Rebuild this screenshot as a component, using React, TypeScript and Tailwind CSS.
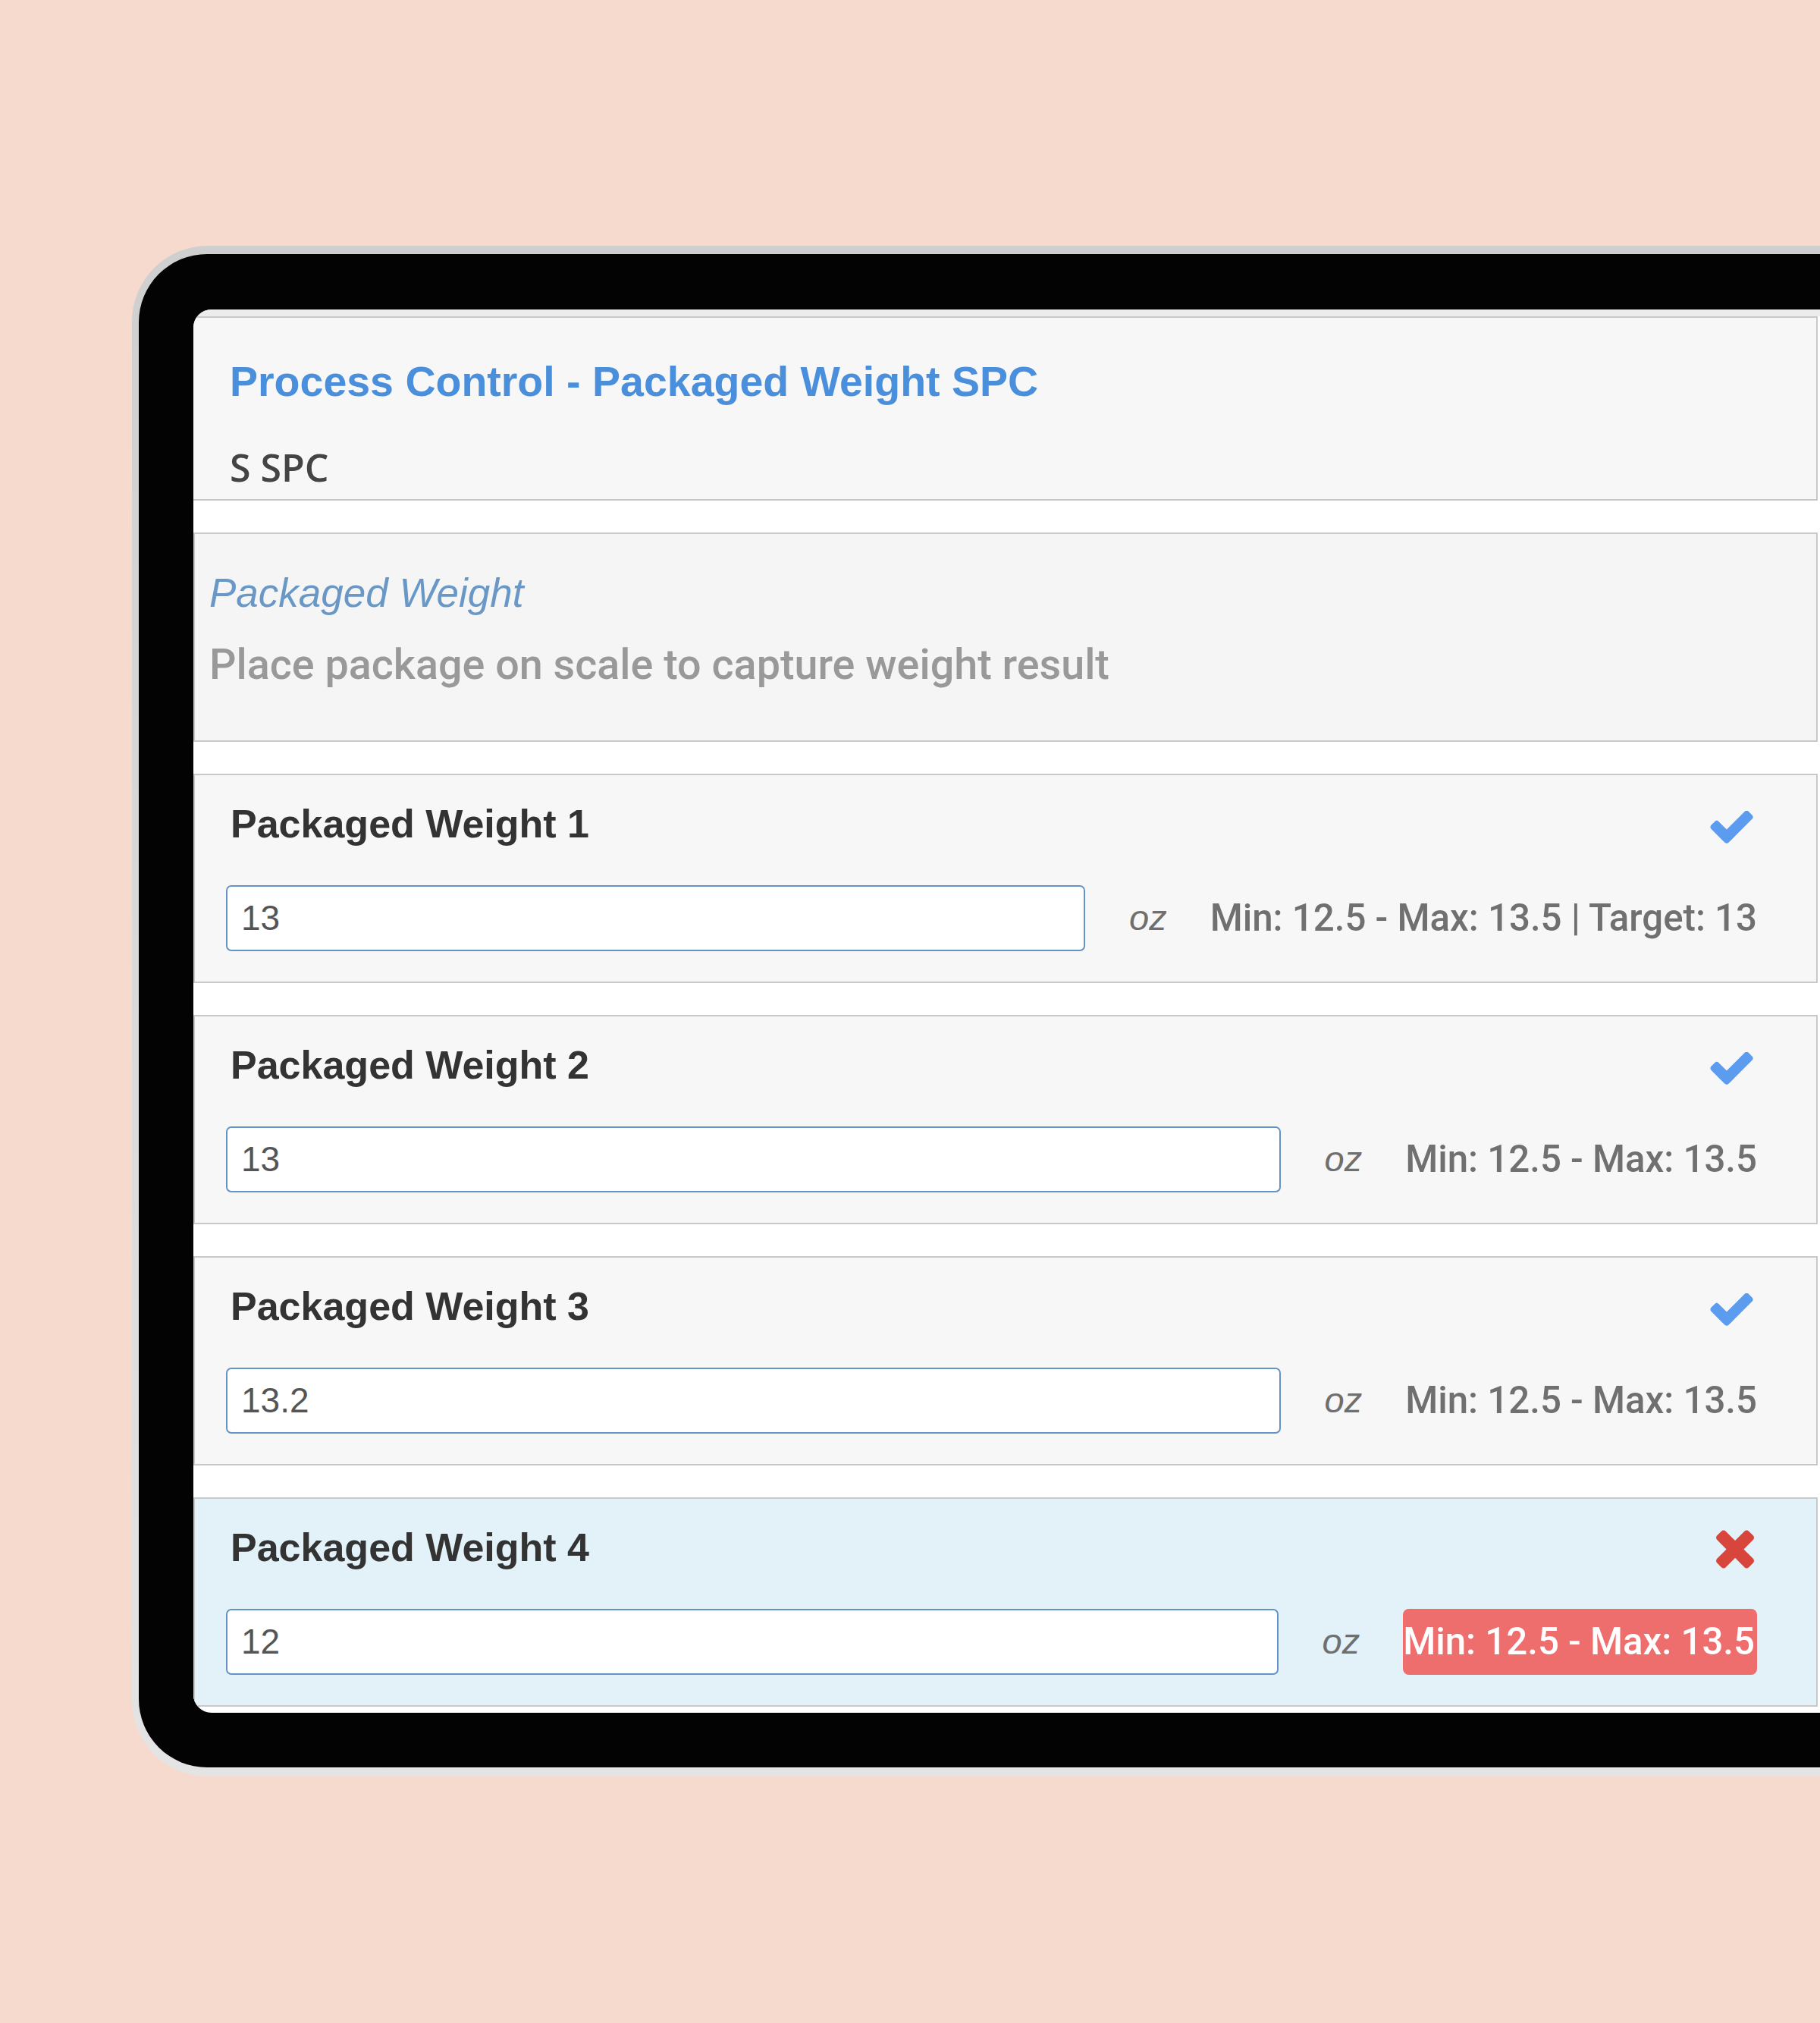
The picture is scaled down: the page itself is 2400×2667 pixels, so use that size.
type Reading = {
  label: string;
  value: string;
  range: string;
  ok: boolean;
};

const readings: Reading[] = [
  { label: "Packaged Weight 1", value: "13", range: "Min: 12.5 - Max: 13.5 | Target: 13", ok: true },
  { label: "Packaged Weight 2", value: "13", range: "Min: 12.5 - Max: 13.5", ok: true },
  { label: "Packaged Weight 3", value: "13.2", range: "Min: 12.5 - Max: 13.5", ok: true },
  { label: "Packaged Weight 4", value: "12", range: "Min: 12.5 - Max: 13.5", ok: false },
];

const sans = "font-['Liberation_Sans','Helvetica_Neue',Arial,sans-serif]";
const medium = "font-['Roboto','Liberation_Sans',Arial,sans-serif] font-medium";

// font-awesome 4 style glyphs
function CheckIcon() {
  return (
    <svg viewBox="110 420 1570 1110" className="mr-[5px] mt-[12px] h-[46px] w-[57px] text-[#5b9cee]" fill="currentColor">
      <path d="M1671 566q0 40-28 68l-724 724-136 136q-28 28-68 28t-68-28l-136-136-362-362q-28-28-28-68t28-68l136-136q28-28 68-28t68 28l294 295 656-657q28-28 68-28t68 28l136 136q28 28 28 68z" />
    </svg>
  );
}

function CrossIcon() {
  return (
    <svg viewBox="110 270 1380 1265" className="mr-[4px] h-[56px] w-[58px] text-[#d8453c]" fill="currentColor">
      <path d="M1490 1322q0 40-28 68l-136 136q-28 28-68 28t-68-28l-294-294-294 294q-28 28-68 28t-68-28l-136-136q-28-28-28-68t28-68l294-294-294-294q-28-28-28-68t28-68l136-136q28-28 68-28t68 28l294 294 294-294q28-28 68-28t68 28l136 136q28 28 28 68t-28 68l-294 294 294 294q28 28 28 68z" />
    </svg>
  );
}

function WeightCard({ reading }: { reading: Reading }) {
  return (
    <div
      className={`mt-[42px] h-[276px] w-[2142px] border-2 border-[#c9c9c9] pl-[41px] pr-[78px] pt-[34px] ${
        reading.ok ? "bg-[#f7f7f7]" : "bg-[#e3f1f9]"
      }`}
    >
      <div className="flex h-[60px] items-center justify-between">
        <span className={`${sans} pl-[6px] text-[52px] font-bold leading-[60px] text-[#333333]`}>
          {reading.label}
        </span>
        {reading.ok ? <CheckIcon /> : <CrossIcon />}
      </div>
      <div className="mt-[51px] flex h-[87px] items-center">
        <div className="flex h-[87px] flex-1 items-center rounded-[7px] border-2 border-[#6393c8] bg-white pl-[18px]">
          <span className={`${sans} text-[46px] text-[#555555]`}>{reading.value}</span>
        </div>
        <span className={`${sans} ml-[58px] text-[47px] italic text-[#6f6f6f]`}>oz</span>
        <span
          className={`${medium} ml-[57px] flex h-[87px] items-center whitespace-nowrap rounded-[8px] text-[49.2px] ${
            reading.ok ? "text-[#707070]" : "bg-[#ee6d6d] pr-[3px] text-white"
          }`}
        >
          {reading.range}
        </span>
      </div>
    </div>
  );
}

export default function App() {
  return (
    <div className="h-[2667px] w-[2400px] overflow-hidden bg-[#f6dacd] pl-[174px] pt-[324px]">
      <div className="w-[2500px] rounded-l-[100px] bg-gradient-to-b from-[#cfcfcf] to-[#e4e4e4] pb-[12px] pl-[9px] pt-[11px]">
        <div className="rounded-l-[90px] bg-[#030303] pb-[72px] pl-[72px] pt-[73px]">
          <div className="h-[1850px] overflow-hidden rounded-l-[24px] bg-white">
            <div className="h-[9px] bg-[#ececec]" />
            <div className="h-[243px] w-[2142px] border-y-2 border-r-2 border-[#c9c9c9] bg-[#f7f7f7] pl-[48px] pt-[52px]">
              <div className={`${sans} text-[55.5px] font-bold leading-[64px] text-[#4a8fdb]`}>
                Process Control - Packaged Weight SPC
              </div>
              <div className="mt-[53px] font-['Open_Sans',sans-serif] text-[50px] font-semibold leading-[56px] text-[#444444]">
                S SPC
              </div>
            </div>
            <div className="mt-[42px] h-[276px] w-[2142px] border-2 border-[#c9c9c9] bg-[#f5f5f5] pl-[19px] pt-[47px]">
              <div className={`${sans} text-[53px] italic leading-[62px] text-[#6a98c6]`}>
                Packaged Weight
              </div>
              <div className={`${medium} mt-[31px] text-[55.7px] leading-[64px] text-[#999999]`}>
                Place package on scale to capture weight result
              </div>
            </div>
            {readings.map((reading) => (
              <WeightCard key={reading.label} reading={reading} />
            ))}
          </div>
        </div>
      </div>
    </div>
  );
}
